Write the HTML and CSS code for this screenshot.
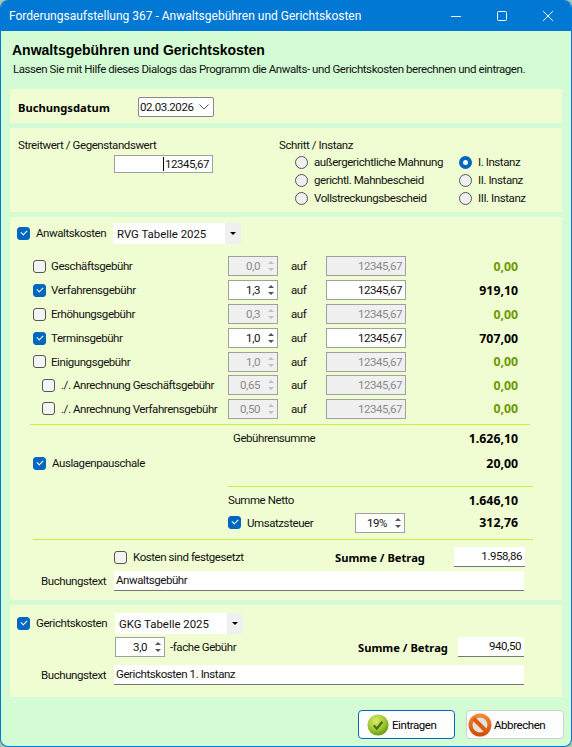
FILE: index.html
```html
<!DOCTYPE html>
<html lang="de">
<head>
    <meta charset="UTF-8">
    <title>Forderungsaufstellung 367</title>
    <link rel="stylesheet" href="styles.css">
</head>
<body>
<div class="window">
    <div class="titlebar">
        <span class="title">Forderungsaufstellung 367 - Anwaltsgebühren und Gerichtskosten</span>
        <div class="win-buttons">
            <svg width="12" height="12" viewBox="0 0 12 12"><path d="M1 6.5h10" stroke="#fff" fill="none"/></svg>
            <svg width="12" height="12" viewBox="0 0 12 12"><rect x="1.5" y="1.5" width="9" height="9" rx="1" stroke="#fff" fill="none"/></svg>
            <svg width="12" height="12" viewBox="0 0 12 12"><path d="M1 1l10 10M11 1L1 11" stroke="#fff" fill="none"/></svg>
        </div>
    </div>

    <div class="content">
        <h1>Anwaltsgebühren und Gerichtskosten</h1>
        <p class="intro">Lassen Sie mit Hilfe dieses Dialogs das Programm die Anwalts- und Gerichtskosten berechnen und eintragen.</p>

        <!-- Buchungsdatum -->
        <div class="panel panel-date">
            <span class="strong date-label">Buchungsdatum</span>
            <div class="datepicker">02.03.2026
                <svg width="10" height="6" viewBox="0 0 10 6"><path d="M0.5 0.5L5 5l4.5-4.5" stroke="#555" fill="none"/></svg>
            </div>
        </div>

        <!-- Streitwert -->
        <div class="panel panel-value">
            <div class="value-col">
                <div>Streitwert / Gegenstandswert</div>
                <div class="field streitwert"><i class="caret"></i>12345,67</div>
            </div>
            <div class="step-col">
                <div>Schritt / Instanz</div>
                <div class="radio-grid">
                    <label><i class="radio"></i>außergerichtliche Mahnung</label>
                    <label><i class="radio on"></i>I. Instanz</label>
                    <label><i class="radio"></i>gerichtl. Mahnbescheid</label>
                    <label><i class="radio"></i>II. Instanz</label>
                    <label><i class="radio"></i>Vollstreckungsbescheid</label>
                    <label><i class="radio"></i>III. Instanz</label>
                </div>
            </div>
        </div>

        <!-- Anwaltskosten -->
        <div class="panel panel-lawyer">
            <div class="row head-row">
                <i class="check on"></i><span class="head-label">Anwaltskosten</span>
                <div class="select">RVG Tabelle 2025<b class="select-btn"></b></div>
            </div>

            <div class="fees" id="fees"></div>

            <hr class="rule rule-fees">
            <div class="row sum-row">
                <span>Gebührensumme</span>
                <span class="amount">1.626,10</span>
            </div>
            <div class="row costs-row">
                <i class="check on"></i><span class="costs-label">Auslagenpauschale</span>
                <span class="amount">20,00</span>
            </div>
            <hr class="rule rule-net">
            <div class="row net-row">
                <span>Summe Netto</span>
                <span class="amount">1.646,10</span>
            </div>
            <div class="row tax-row">
                <i class="check on"></i><span class="tax-label">Umsatzsteuer</span>
                <div class="spin">19%<span class="arrows"><b></b><b></b></span></div>
                <span class="amount">312,76</span>
            </div>
            <hr class="rule rule-total">
            <div class="row total-row">
                <i class="check"></i><span class="fixed-label">Kosten sind festgesetzt</span>
                <span class="strong total-label">Summe / Betrag</span>
                <div class="field result total-field">1.958,86</div>
            </div>
            <div class="row text-row">
                <span class="text-label">Buchungstext</span>
                <div class="field result text-field">Anwaltsgebühr</div>
            </div>
        </div>

        <!-- Gerichtskosten -->
        <div class="panel panel-court">
            <div class="row head-row">
                <i class="check on"></i><span class="head-label court">Gerichtskosten</span>
                <div class="select">GKG Tabelle 2025<b class="select-btn"></b></div>
            </div>
            <div class="row court-row">
                <div class="spin">3,0<span class="arrows"><b></b><b></b></span></div>
                <span class="times">-fache Gebühr</span>
                <span class="strong court-total">Summe / Betrag</span>
                <div class="field result court-field">940,50</div>
            </div>
            <div class="row text-row">
                <span class="text-label">Buchungstext</span>
                <div class="field result text-field">Gerichtskosten 1. Instanz</div>
            </div>
        </div>

        <div class="buttons">
            <button class="btn default">
                <svg width="22" height="22" viewBox="0 0 24 24">
                    <defs><radialGradient id="okBall" cx="40%" cy="30%" r="75%"><stop offset="0" stop-color="#d6ec6a"/><stop offset="0.6" stop-color="#9cc62c"/><stop offset="1" stop-color="#5f8f12"/></radialGradient></defs>
                    <circle cx="12" cy="12" r="11.5" fill="url(#okBall)"/>
                    <path d="M7.5 12.5l3.2 3.5 6-7.5" stroke="#4a6a18" stroke-width="2.4" fill="none"/>
                </svg>
                Eintragen
            </button>
            <button class="btn cancel">
                <svg width="24" height="24" viewBox="0 0 24 24">
                    <defs><linearGradient id="noRing" x1="0" y1="0" x2="0" y2="1"><stop offset="0" stop-color="#ee8a3a"/><stop offset="1" stop-color="#d24e08"/></linearGradient></defs>
                    <circle cx="12" cy="12" r="9.5" fill="#e6e1da" stroke="url(#noRing)" stroke-width="4"/>
                    <path d="M5.5 5.5l13 13" stroke="#dc5a12" stroke-width="4"/>
                </svg>
                Abbrechen
            </button>
        </div>
    </div>
</div>

<script>
    // Fee rows: label, factor, amount, checked, indented
    const fees = [
        ["Geschäftsgebühr", "0,0", "0,00", false, false],
        ["Verfahrensgebühr", "1,3", "919,10", true, false],
        ["Erhöhungsgebühr", "0,3", "0,00", false, false],
        ["Terminsgebühr", "1,0", "707,00", true, false],
        ["Einigungsgebühr", "1,0", "0,00", false, false],
        ["./. Anrechnung Geschäftsgebühr", "0,65", "0,00", false, true],
        ["./. Anrechnung Verfahrensgebühr", "0,50", "0,00", false, true]
    ];

    document.getElementById("fees").innerHTML = fees.map(([label, factor, amount, on, sub]) => `
        <div class="row fee${sub ? " sub" : ""}${on ? "" : " off"}">
            <i class="check${on ? " on" : ""}"></i>
            <span class="fee-label">${label}</span>
            <div class="spin">${factor}<span class="arrows"><b></b><b></b></span></div>
            <span class="auf">auf</span>
            <div class="field base">12345,67</div>
            <span class="amount">${amount}</span>
        </div>`).join("");
</script>
</body>
</html>
```

FILE: styles.css
```css
:root {
    --panel: #f0fdd2;
    --window: #d4fcd4;
    --blue: #0078d4;
    --check: #0067c0;
    --line: #c3f53c;
    --border: #a0a0a0;
}

* {
    box-sizing: border-box;
}

html, body {
    margin: 0;
    height: 100%;
    background: #a8c8a8;
}

body {
    font-family: Roboto, sans-serif;
    font-size: 11.5px;
    letter-spacing: -0.43px;
    color: #111;
    white-space: nowrap;
}

.window {
    width: 572px;
    height: 747px;
    border-radius: 8px;
    overflow: hidden;
    background: var(--window);
    border: 1px solid var(--blue);
    border-top: 0;
}

.titlebar {
    height: 31px;
    margin: 0 -1px;
    padding: 0 18px 0 9px;
    background: var(--blue);
    color: #fff;
    font-size: 12px;
    letter-spacing: 0;
    display: flex;
    align-items: center;
    justify-content: space-between;
}

.win-buttons {
    display: flex;
    gap: 34px;
}

.content {
    padding: 0 9px;
}

h1 {
    margin: 0;
    padding: 9px 0 0 2px;
    height: 29px;
    font-size: 14px;
    letter-spacing: 0;
    line-height: 20px;
    font-weight: bold;
    color: #000;
    font-family: "Liberation Sans", sans-serif;
}

.intro {
    margin: 0;
    padding-left: 3px;
    height: 29px;
    line-height: 18px;
}

.panel {
    width: 552px;
    background: var(--panel);
    margin-bottom: 5px;
}

.row {
    display: flex;
    align-items: center;
}

.strong {
    font-family: "Noto Sans", sans-serif;
    font-weight: bold;
    font-size: 11.2px;
    letter-spacing: 0;
    color: #000;
}

/* Form controls */
.field {
    height: 20px;
    background: #fff;
    border: 1px solid var(--border);
    text-align: right;
    line-height: 18px;
    padding: 0 3px;
}

.field.result {
    border: 0;
    border-bottom: 1px solid #777;
    line-height: 19px;
    padding: 0 3px 0 2px;
}

.check {
    flex: none;
    display: block;
    position: relative;
    width: 13px;
    height: 13px;
    border: 1px solid #555;
    border-radius: 3px;
    background: #f4f4f4;
}

.check.on {
    background: var(--check);
    border-color: var(--check);
}

.check.on::after {
    content: "";
    position: absolute;
    left: 3px;
    top: 2px;
    width: 5px;
    height: 3px;
    border-left: 1px solid #fff;
    border-bottom: 1px solid #fff;
    transform: rotate(-45deg);
}

.radio {
    flex: none;
    display: block;
    width: 13px;
    height: 13px;
    border: 1px solid #555;
    border-radius: 50%;
    background: #f0f0f0;
}

.radio.on {
    border: 4px solid var(--check);
    background: #fff;
}

.spin {
    flex: none;
    width: 50px;
    height: 20px;
    background: #fff;
    border: 1px solid var(--border);
    display: flex;
    align-items: center;
    justify-content: flex-end;
    line-height: 18px;
}

.arrows {
    width: 12px;
    margin-left: 5px;
    display: flex;
    flex-direction: column;
    align-items: center;
    gap: 4px;
}

.arrows b {
    width: 0;
    height: 0;
    border-left: 3px solid transparent;
    border-right: 3px solid transparent;
    border-bottom: 3px solid #555;
}

.arrows b + b {
    border-bottom: 0;
    border-top: 3px solid #555;
}

.select {
    width: 128px;
    height: 21px;
    background: #fff;
    line-height: 22px;
    font-size: 11.4px;
    letter-spacing: 0;
    padding-left: 4px;
    display: flex;
    justify-content: space-between;
}

.select-btn {
    width: 16px;
    height: 21px;
    background: #f0f0f0;
    display: flex;
    align-items: center;
    justify-content: center;
}

.select-btn::after {
    content: "";
    border-left: 3px solid transparent;
    border-right: 3px solid transparent;
    border-top: 3px solid #000;
}

.rule {
    height: 1px;
    border: 0;
    margin: 0;
    background: var(--line);
}

/* Buchungsdatum */
.panel-date {
    height: 34px;
    display: flex;
    align-items: center;
    padding: 2px 0 0 8px;
}

.date-label {
    width: 120px;
}

.datepicker {
    width: 76px;
    height: 20px;
    background: #fff;
    border: 1px solid #888;
    border-radius: 2px;
    padding: 0 4px 0 1px;
    line-height: 18px;
    display: flex;
    align-items: center;
    justify-content: space-between;
}

/* Streitwert */
.panel-value {
    height: 84px;
    display: flex;
    padding: 10px 0 0 8px;
}

.value-col {
    width: 261px;
    line-height: 15px;
}

.streitwert {
    width: 99px;
    height: 18px;
    margin: 2px 0 0 96px;
    display: flex;
    justify-content: flex-end;
    align-items: center;
}

.caret {
    width: 1px;
    height: 14px;
    background: #000;
    margin-right: 1px;
}

.step-col {
    line-height: 15px;
}

.radio-grid {
    display: grid;
    grid-template-columns: 164px auto;
    grid-auto-rows: 18px;
    padding-left: 16px;
}

.radio-grid label {
    display: flex;
    align-items: center;
    gap: 6px;
}

/* Anwaltskosten */
.panel-lawyer {
    height: 383px;
    padding-top: 6px;
}

.head-row {
    height: 21px;
    padding-left: 7px;
}

.head-label {
    margin: -2px 0 0 6px;
    width: 77px;
}

.head-label.court {
    width: 79px;
}

.fees {
    margin-top: 10px;
}

.fee {
    height: 24px;
    padding-left: 23px;
}

.fee:nth-child(5), .fee:nth-child(7) {
    height: 23px;
}

.fee.sub {
    padding-left: 32px;
}

.fee-label {
    margin-left: 5px;
    width: 177px;
}

.fee.sub .fee-label {
    margin-left: 6px;
    width: 167px;
}

.fee.off .spin, .fee.off .field {
    background: #f0f0f0;
    color: #8a8a8a;
}

.fee.off .arrows b {
    border-bottom-color: #c0c0c0;
    border-top-color: #c0c0c0;
}

.auf {
    width: 48px;
    padding-left: 13px;
}

.base {
    width: 80px;
}

.amount {
    margin-left: auto;
    margin-right: 44px;
    font-family: "Noto Sans", sans-serif;
    font-weight: bold;
    font-size: 12.3px;
    letter-spacing: 0;
    color: #000;
}

.fee.off .amount {
    color: #6c9a00;
}

.rule-fees {
    width: 500px;
    margin: 4px 0 0 20px;
}

.sum-row {
    height: 26px;
    padding-left: 223px;
}

.costs-row {
    height: 24px;
    padding-left: 23px;
}

.costs-label {
    margin-left: 6px;
}

.rule-net {
    width: 305px;
    margin: 11px 0 0 218px;
}

.net-row {
    height: 26px;
    padding-left: 218px;
}

.tax-row {
    height: 19px;
    padding-left: 218px;
}

.tax-label {
    margin-left: 6px;
    width: 108px;
}

.rule-total {
    width: 500px;
    margin: 7px 0 0 23px;
}

.total-row {
    height: 20px;
    margin-top: 7px;
    padding-left: 104px;
}

.fixed-label {
    margin-left: 6px;
    width: 202px;
}

.total-label {
    width: 119px;
}

.total-field {
    width: 71px;
}

.text-row {
    height: 20px;
    margin-top: 4px;
    padding-left: 31px;
}

.text-label {
    width: 73px;
}

.text-field {
    width: 410px;
    text-align: left;
}

/* Gerichtskosten */
.panel-court {
    height: 92px;
    padding-top: 8px;
    margin-bottom: 13px;
}

.court-row {
    height: 20px;
    margin-top: 3px;
    padding-left: 105px;
}

.times {
    margin-left: 5px;
    width: 188px;
}

.court-total {
    width: 100px;
}

.court-field {
    width: 66px;
}

.panel-court .text-row {
    margin-top: 8px;
}

/* Buttons */
.buttons {
    display: flex;
    justify-content: flex-end;
    gap: 11px;
    margin-right: -2px;
}

.btn {
    width: 97px;
    height: 29px;
    font: inherit;
    letter-spacing: inherit;
    color: #000;
    background: #fdfdfd;
    border: 1px solid #d0d0d0;
    border-radius: 4px;
    display: flex;
    align-items: center;
    gap: 3px;
    padding: 0 0 0 8px;
}

.btn.cancel {
    width: 98px;
    gap: 2px;
    padding-left: 1px;
}

.btn.default {
    border: 1px solid var(--check);
}
```
